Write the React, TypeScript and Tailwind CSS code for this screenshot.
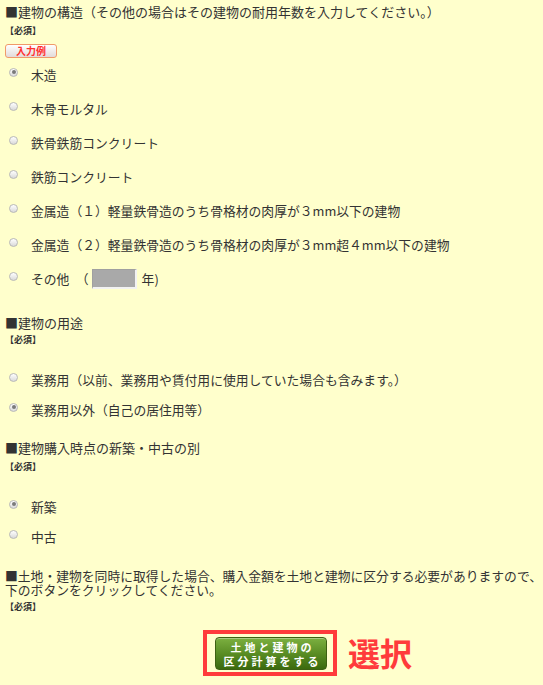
import React from "react";

const FONT = '"Noto Sans CJK JP", "Noto Sans", sans-serif';

function Radio({ checked }: { checked?: boolean }) {
  return (
    <span className="relative -top-[3px] ml-[4px] mr-[14px] flex h-[9px] w-[9px] shrink-0 items-center justify-center rounded-full border border-[#b8b8b8] bg-gradient-to-b from-[#ffffff] to-[#dadada]">
      {checked && <span className="h-[4px] w-[4px] rounded-full bg-[#7a7a7a]" />}
    </span>
  );
}

function Row({ checked, h, children }: { checked?: boolean; h: "34" | "30"; children: React.ReactNode }) {
  return (
    <div className={`flex items-center ${h === "34" ? "h-[34px]" : "h-[30px]"}`}>
      <Radio checked={checked} />
      <div className="-ml-[1px] flex items-center whitespace-nowrap text-[12.8px] leading-[16px]">{children}</div>
    </div>
  );
}

function Required({ mt }: { mt: string }) {
  return (
    <div className={`${mt} h-[12px] text-[9px] font-bold leading-[12px] text-[#333]`}>【必須】</div>
  );
}

export default function App() {
  return (
    <div
      className="h-[685px] w-[543px] overflow-hidden bg-[#ffffcc] pl-[5px] pt-[4px] text-[#333]"
      style={{ fontFamily: FONT }}
    >
      <div className="h-[16px] whitespace-nowrap text-[13px] leading-[16px]">
        ■建物の構造（その他の場合はその建物の耐用年数を入力してください。）
      </div>
      <Required mt="mt-[5px]" />
      <div className="mt-[7px] flex h-[14px] w-[52px] items-center justify-center rounded-[3px] border border-[#f09a6a] bg-gradient-to-b from-[#ffffff] to-[#e2dada] text-[10px] font-bold leading-none text-[#ff3030]">
        入力例
      </div>
      <Row h="34" checked>木造</Row>
      <Row h="34">木骨モルタル</Row>
      <Row h="34">鉄骨鉄筋コンクリート</Row>
      <Row h="34">鉄筋コンクリート</Row>
      <Row h="34">金属造（１）軽量鉄骨造のうち骨格材の肉厚が３mm以下の建物</Row>
      <Row h="34">金属造（２）軽量鉄骨造のうち骨格材の肉厚が３mm超４mm以下の建物</Row>
      <Row h="34">
        <span>その他　（</span>
        <span className="ml-[3px] h-[20px] w-[45px] border-t border-l border-t-[#a0a0a0] border-l-[#a0a0a0] border-r-2 border-b-2 border-r-[#f2f2f2] border-b-[#f2f2f2] bg-[#a9a9a9]" />
        <span className="ml-[5px]">年)</span>
      </Row>

      <div className="mt-[19px] h-[16px] text-[13px] leading-[16px]">■建物の用途</div>
      <Required mt="mt-[3px]" />
      <div className="mt-[19px]">
        <Row h="30">業務用（以前、業務用や賃付用に使用していた場合も含みます。）</Row>
        <Row h="30" checked>業務用以外（自己の居住用等）</Row>
      </div>

      <div className="mt-[15px] h-[16px] text-[13px] leading-[16px]">■建物購入時点の新築・中古の別</div>
      <Required mt="mt-[5px]" />
      <div className="mt-[19px]">
        <Row h="30" checked>新築</Row>
        <Row h="30">中古</Row>
      </div>

      <div className="mt-[17px] whitespace-nowrap text-[12.8px] leading-[14px]">
        ■土地・建物を同時に取得した場合、購入金額を土地と建物に区分する必要がありますので、
        <br />
        下のボタンをクリックしてください。
      </div>
      <Required mt="mt-[4px]" />

      <div className="mt-[17px] flex items-center pl-[198px]">
        <div className="h-[46px] w-[134px] border-4 border-[#ff3b3b] pl-[8px] pt-[3px]">
          <div className="flex h-[33px] w-[112px] flex-col items-center justify-center rounded-[4px] border border-[#3d6012] bg-gradient-to-b from-[#7cb040] via-[#5a8d24] to-[#3b6a0e] text-[11px] font-bold leading-[14px] tracking-[3px] text-white shadow-[inset_0_1px_0_rgba(255,255,255,0.35)]">
            <span className="pl-[3px]">土地と建物の</span>
            <span className="pl-[3px]">区分計算をする</span>
          </div>
        </div>
        <span className="ml-[11px] -mt-[2px] text-[32px] font-bold leading-none text-[#ff3b3b]">選択</span>
      </div>
    </div>
  );
}
